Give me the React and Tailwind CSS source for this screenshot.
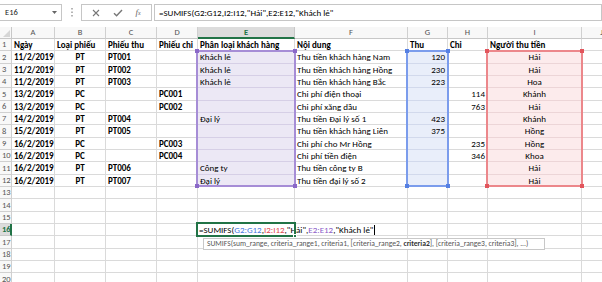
import React from "react";

const W = ["w-[12px]", "w-[43px]", "w-[51px]", "w-[51px]", "w-[41px]", "w-[97px]", "w-[113px]", "w-[40px]", "w-[40px]", "w-[94px]", "w-[40px]"];
const LETTERS = ["", "A", "B", "C", "D", "E", "F", "G", "H", "I", "J"];

const DATA = [
  ["Ngày", "Loại phiếu", "Phiếu thu", "Phiếu chi", "Phân loại khách hàng", "Nội dung", "Thu", "Chi", "Người thu tiền"],
  ["11/2/2019", "PT", "PT001", "", "Khách lẻ", "Thu tiền khách hàng Nam", "120", "", "Hải"],
  ["11/2/2019", "PT", "PT002", "", "Khách lẻ", "Thu tiền khách hàng Hồng", "230", "", "Hải"],
  ["11/2/2019", "PT", "PT003", "", "Khách lẻ", "Thu tiền khách hàng Bắc", "223", "", "Hoa"],
  ["13/2/2019", "PC", "", "PC001", "", "Chi phí điện thoại", "", "114", "Khánh"],
  ["13/2/2019", "PC", "", "PC002", "", "Chi phí xăng dầu", "", "763", "Hải"],
  ["14/2/2019", "PT", "PT004", "", "Đại lý", "Thu tiền Đại lý số 1", "423", "", "Khánh"],
  ["15/2/2019", "PT", "PT005", "", "", "Thu tiền khách hàng Liên", "375", "", "Hồng"],
  ["16/2/2019", "PC", "", "PC003", "", "Chi phí cho Mr Hồng", "", "235", "Hồng"],
  ["16/2/2019", "PC", "", "PC004", "", "Chi phí tiền điện", "", "346", "Khoa"],
  ["16/2/2019", "PT", "PT006", "", "Công ty", "Thu tiền công ty B", "", "", "Hải"],
  ["16/2/2019", "PT", "PT007", "", "Đại lý", "Thu tiền đại lý số 2", "", "", "Hải"],
];

const ALIGN = ["justify-start", "justify-center", "justify-start", "justify-start", "justify-start", "justify-start", "justify-end", "justify-end", "justify-center"];

function fillFor(row, col) {
  if (row < 2 || row > 12) return "bg-white border-[#dadada]";
  if (col === 4) return "bg-[#ece8f5] border-[#d6cfe6]";
  if (col === 6) return "bg-[#e9eefa] border-[#d2d9ec]";
  if (col === 8) return "bg-[#fcebec] border-[#ecd5d7]";
  return "bg-white border-[#dadada]";
}

function Corner({ cls, pos }) {
  return <div className={`absolute w-[4px] h-[4px] ${cls} ${pos}`} />;
}

function Range({ pos, border, dot }) {
  return (
    <div className={`absolute border-2 ${border} ${pos} pointer-events-none`}>
      <Corner cls={dot} pos="-left-[3px] -top-[3px]" />
      <Corner cls={dot} pos="-right-[3px] -top-[3px]" />
      <Corner cls={dot} pos="-left-[3px] -bottom-[3px]" />
      <Corner cls={dot} pos="-right-[3px] -bottom-[3px]" />
    </div>
  );
}

export default function App() {
  const rows = [];
  for (let r = 1; r <= 20; r++) {
    const d = DATA[r - 1];
    const active = r === 16;
    rows.push(
      <div key={r} className="flex h-[12.33px]">
        <div
          className={`${W[0]} shrink-0 flex items-center pl-[2px] text-[8.5px] border-b ${
            active
              ? "bg-[#dcdcdc] text-[#217346] font-bold border-r-2 border-r-[#217346] border-b-[#c9c9c9]"
              : "bg-[#f8f8f8] text-[#555] border-r border-[#d0d0d0]"
          }`}
        >
          {r}
        </div>
        {W.slice(1).map((w, ci) => {
          const col = ci;
          const txt = d && col < 9 ? d[col] : "";
          const bold = r === 1 || col <= 3;
          return (
            <div
              key={ci}
              className={`${w} shrink-0 flex items-center overflow-hidden whitespace-nowrap px-[2px] border-r border-b text-[9px] text-black ${fillFor(r, col)} ${
                r === 1 ? "justify-start" : ALIGN[col] || "justify-start"
              } ${bold ? "font-bold" : ""}`}
            >
              {txt}
            </div>
          );
        })}
      </div>
    );
  }

  return (
    <div className="relative w-[602px] h-[282px] overflow-hidden bg-white font-['Calibri','Carlito','Roboto',sans-serif] text-black">
      {/* Formula bar */}
      <div className="h-[27px] flex items-start pt-[4px] bg-white">
        <div className="w-[63px] h-[17px] -ml-[1px] border border-[#c6c6c6] flex items-center justify-between pl-[5px] pr-[4px] text-[8.5px] text-[#222]">
          <span>E16</span>
          <svg width="5" height="3" viewBox="0 0 5 3"><path d="M0 0h5L2.5 3z" fill="#666" /></svg>
        </div>
        <div className="w-[19px] h-[17px] flex items-center justify-center">
          <svg width="2" height="9" viewBox="0 0 2 9">
            <rect x="0" y="0" width="2" height="1.5" fill="#b5b5b5" />
            <rect x="0" y="3.5" width="2" height="1.5" fill="#b5b5b5" />
            <rect x="0" y="7" width="2" height="1.5" fill="#b5b5b5" />
          </svg>
        </div>
        <div className="w-[71px] h-[17px] border border-[#c6c6c6] flex items-center justify-around px-[4px] text-[#777]">
          <svg width="8" height="8" viewBox="0 0 8 8"><path d="M1 1l6 6M7 1L1 7" stroke="#777" strokeWidth="1.1" /></svg>
          <svg width="10" height="8" viewBox="0 0 10 8"><path d="M1 4.2l2.6 2.6L9 1" stroke="#777" strokeWidth="1.4" fill="none" /></svg>
          <span className="italic text-[9px] font-['Liberation_Serif',serif] text-[#666]">
            f<span className="text-[6px]">x</span>
          </span>
        </div>
        <div className="ml-[2px] flex-1 h-[17px] border border-[#c6c6c6] flex items-center pl-[4px] text-[9px] font-medium whitespace-nowrap">
          =SUMIFS(G2:G12,I2:I12,"Hải",E2:E12,"Khách lẻ"
        </div>
      </div>

      {/* Column headers */}
      <div className="flex h-[12px]">
        <div className={`${W[0]} shrink-0 bg-[#f8f8f8] border-r border-b border-[#c8c8c8] flex items-end justify-end pr-[1px] pb-[1px]`}>
          <svg width="7" height="7" viewBox="0 0 7 7"><path d="M7 0v7H0z" fill="#d6d6d6" /></svg>
        </div>
        {W.slice(1).map((w, i) => {
          const isE = i === 4;
          return (
            <div
              key={i}
              className={`${w} shrink-0 flex items-center justify-center text-[8.5px] ${
                isE
                  ? "bg-[#dcdcdc] text-[#217346] font-bold border-r border-r-[#c8c8c8] border-b-2 border-b-[#217346]"
                  : "bg-[#f8f8f8] text-[#555] border-r border-b border-[#d0d0d0] border-b-[#c8c8c8]"
              }`}
            >
              {LETTERS[i + 1]}
            </div>
          );
        })}
      </div>

      {/* Grid rows */}
      <div>{rows}</div>

      {/* Formula reference ranges */}
      <Range pos="left-[196px] top-[50px] w-[100px] h-[137px]" border="border-[#a68dd6]" dot="bg-[#8a68c8]" />
      <Range pos="left-[406px] top-[50px] w-[43px] h-[137px]" border="border-[#7b9cec]" dot="bg-[#557fe2]" />
      <Range pos="left-[486px] top-[50px] w-[97px] h-[137px]" border="border-[#ec878b]" dot="bg-[#e2555c]" />

      {/* Editing cell E16 */}
      <div className="absolute left-[198px] top-[224px] h-[11px] w-[186px] bg-white flex items-center pl-[1px] text-[9px] font-medium whitespace-nowrap">
        <span>=SUMIFS(</span>
        <span className="text-[#4a78e0]">G2:G12</span>
        <span>,</span>
        <span className="text-[#e0474f]">I2:I12</span>
        <span>,"Hải",</span>
        <span className="text-[#8b5cc8]">E2:E12</span>
        <span>,"Khách lẻ"</span>
        <span className="inline-block w-[1px] h-[10px] bg-black ml-[1px]" />
      </div>
      <div className="absolute left-[196px] top-[222px] w-[100px] h-[15px] border-2 border-[#217346] pointer-events-none">
        <div className="absolute -right-[3px] -bottom-[3px] w-[4px] h-[4px] bg-[#217346] border border-white" />
      </div>

      {/* Function tooltip */}
      <div className="absolute left-[203px] top-[238px] w-[342px] h-[12px] bg-white border border-[#c8c8c8] flex items-center pl-[3px] text-[7.6px] text-[#555] whitespace-nowrap">
        SUMIFS(sum_range, criteria_range1, criteria1, [criteria_range2,&nbsp;<b className="text-[#333]">criteria2</b>], [criteria_range3, criteria3], ...)
      </div>
    </div>
  );
}
